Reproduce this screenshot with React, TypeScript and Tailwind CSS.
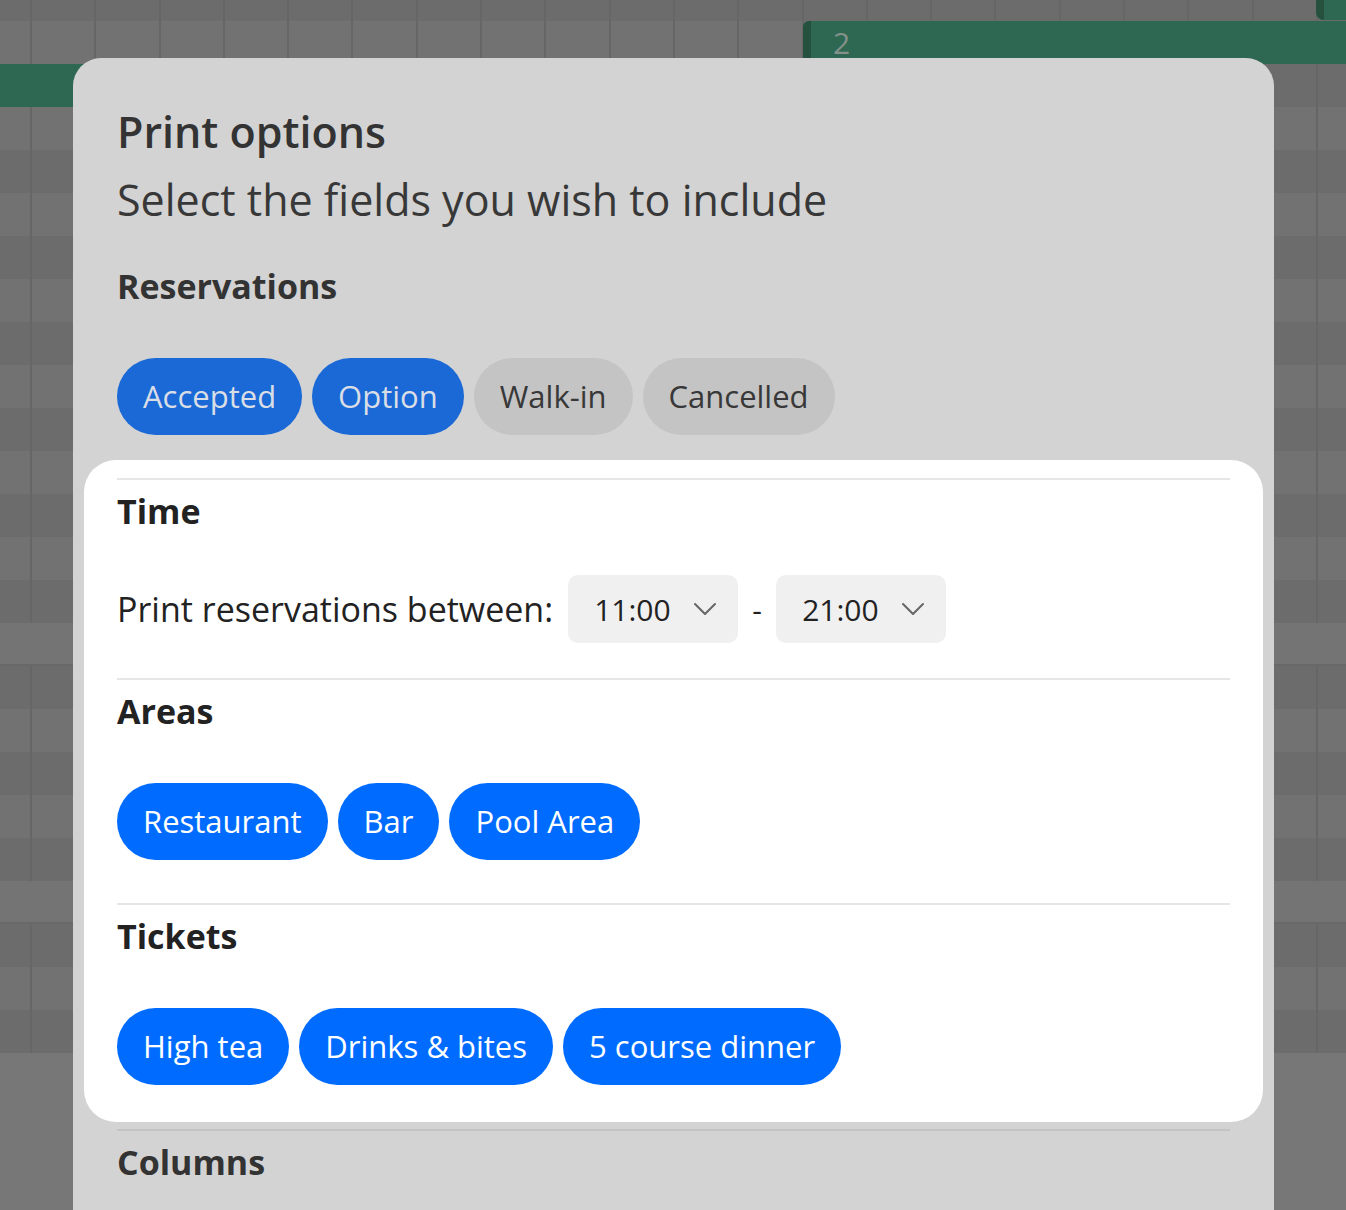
import React from "react";

const COLS = Array.from({ length: 21 }, (_, i) => i);

function GridRow({ h, kind }: { h: string; kind: "dark" | "light" | "band" }) {
  if (kind === "band") {
    return <div className={`${h} w-full bg-[#747474] border-b-2 border-[#686868]`} />;
  }
  return (
    <div className={`${h} w-full flex ${kind === "dark" ? "bg-[#6c6c6c]" : "bg-[#727272]"}`}>
      <div className="w-[30px] shrink-0" />
      {COLS.map((i) => (
        <div key={i} className="w-[64.3px] shrink-0 border-l-2 border-[#666666]" />
      ))}
    </div>
  );
}

function Pill({ label, variant }: { label: string; variant: "dimBlue" | "dimGray" | "blue" }) {
  const cls =
    variant === "dimBlue"
      ? "bg-[#1b69d6] text-[#d9dee6]"
      : variant === "dimGray"
      ? "bg-[#c4c4c4] text-[#383838]"
      : "bg-[#006cff] text-white";
  return (
    <div className={`h-[77px] px-[26px] rounded-full flex items-center text-[31px] font-medium whitespace-nowrap ${cls}`}>
      {label}
    </div>
  );
}

function Chevron() {
  return (
    <svg width="24" height="14" viewBox="0 0 24 14" fill="none">
      <path d="M2 2 L12 12 L22 2" stroke="#666666" strokeWidth="2" strokeLinecap="round" strokeLinejoin="round" />
    </svg>
  );
}

function Select({ value }: { value: string }) {
  return (
    <div className="w-[170px] h-[68px] rounded-[10px] bg-[#f0f0f0] pl-[26px] pr-[21px] flex items-center justify-between">
      <span className="text-[30px] text-[#222222]">{value}</span>
      <Chevron />
    </div>
  );
}

export default function App() {
  const rows: ("dark" | "light" | "band")[] = [];
  for (let k = 0; k < 24; k++) {
    if (k === 14 || k === 20) rows.push("band");
    else rows.push(k % 2 === 1 ? "dark" : "light");
  }
  return (
    <div className="relative w-[1346px] h-[1210px] overflow-hidden bg-[#777777] font-['Open_Sans',sans-serif]">
      {/* calendar background */}
      <div className="flex flex-col">
        <GridRow h="h-[21px]" kind="dark" />
        {rows.map((k, i) => (
          <GridRow key={i} h="h-[43px]" kind={k} />
        ))}
      </div>

      {/* events on calendar */}
      <div className="absolute left-0 top-[64px] w-[120px] h-[43px] bg-[#2e6853]" />
      <div className="absolute left-[803px] top-[21px] w-[560px] h-[43px] bg-[#2e6853] rounded-tl-[6px] flex overflow-hidden">
        <div className="w-[8px] h-full bg-[#26513f]" />
        <span className="ml-[22px] text-[30px] leading-[43px] text-[#84918b]">2</span>
      </div>
      <div className="absolute left-[1316px] top-0 w-[40px] h-[20px] bg-[#2e6853] rounded-bl-[8px] flex overflow-hidden">
        <div className="w-[8px] h-full bg-[#26513f]" />
      </div>

      {/* modal */}
      <div className="absolute left-[73px] top-[58px] w-[1201px] h-[1200px] bg-[#d3d3d3] rounded-t-[28px] px-[44px] pt-[50px]">
        <div className="text-[43px] leading-[48px] font-semibold text-[#333333]">Print options</div>
        <div className="mt-[20px] text-[43px] leading-[48px] text-[#383838]">Select the fields you wish to include</div>

        <div className="mt-[44px] text-[34px] leading-[36px] font-bold text-[#333333]">Reservations</div>
        <div className="mt-[54px] flex gap-[10px]">
          <Pill label="Accepted" variant="dimBlue" />
          <Pill label="Option" variant="dimBlue" />
          <Pill label="Walk-in" variant="dimGray" />
          <Pill label="Cancelled" variant="dimGray" />
        </div>

        {/* highlighted card */}
        <div className="mt-[25px] -mx-[33px] px-[33px] bg-white rounded-[32px] pt-[18px] pb-[37px]">
          <div className="border-t-2 border-[#e6e6e6] pt-[13px] pb-[35px]">
            <div className="text-[34px] leading-[36px] font-bold text-[#222222]">Time</div>
            <div className="mt-[46px] flex items-center">
              <span className="text-[34px] text-[#222222] mr-[15px]">Print reservations between:</span>
              <Select value="11:00" />
              <span className="w-[38px] text-center text-[30px] text-[#222222]">-</span>
              <Select value="21:00" />
            </div>
          </div>
          <div className="border-t-2 border-[#e6e6e6] pt-[13px] pb-[43px]">
            <div className="text-[34px] leading-[36px] font-bold text-[#222222]">Areas</div>
            <div className="mt-[54px] flex gap-[10px]">
              <Pill label="Restaurant" variant="blue" />
              <Pill label="Bar" variant="blue" />
              <Pill label="Pool Area" variant="blue" />
            </div>
          </div>
          <div className="border-t-2 border-[#e6e6e6] pt-[13px]">
            <div className="text-[34px] leading-[36px] font-bold text-[#222222]">Tickets</div>
            <div className="mt-[54px] flex gap-[10px]">
              <Pill label="High tea" variant="blue" />
              <Pill label="Drinks & bites" variant="blue" />
              <Pill label="5 course dinner" variant="blue" />
            </div>
          </div>
        </div>

        <div className="mt-[7px] border-t-2 border-[#c3c3c3] pt-[13px]">
          <div className="text-[34px] leading-[36px] font-bold text-[#333333]">Columns</div>
        </div>
      </div>
    </div>
  );
}
